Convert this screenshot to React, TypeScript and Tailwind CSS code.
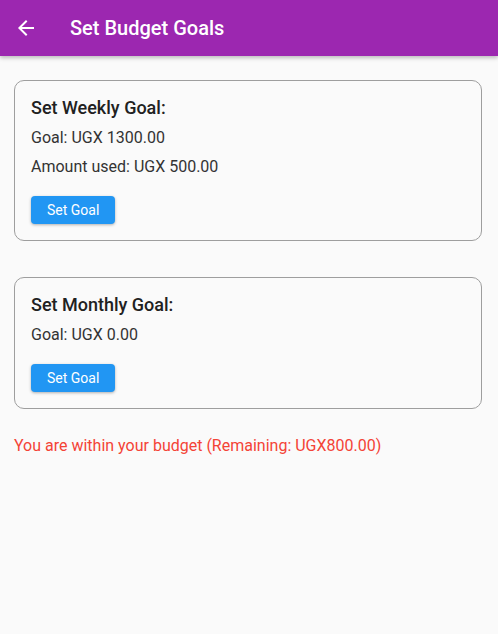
export default function App() {
  const font = { fontFamily: "Roboto, 'Noto Sans', sans-serif" }
  return (
    <div className="min-h-[634px] bg-[#fafafa]" style={font}>
      {/* App bar */}
      <div className="h-14 bg-[#9c27b0] flex items-center shadow-[0_2px_4px_rgba(0,0,0,0.25)] relative z-10">
        <div className="w-[56px] pl-[14px] flex items-center">
          <svg width="24" height="24" viewBox="0 0 24 24" fill="white">
            <path d="M20 11H7.83l5.59-5.59L12 4l-8 8 8 8 1.41-1.41L7.83 13H20v-2z" />
          </svg>
        </div>
        <h1 className="ml-[14px] text-white text-[20px] font-medium leading-none">Set Budget Goals</h1>
      </div>

      {/* Content */}
      <div className="pl-[14px] pr-4 pt-6">
        <div className="border border-[#9e9e9e] rounded-[10px] px-4 pt-[16px] pb-4">
          <h2 className="text-[18px] font-medium text-[#212121] leading-[21px]">Set Weekly Goal:</h2>
          <p className="mt-[10px] text-[16px] text-[#333333] leading-[19px]">Goal: UGX 1300.00</p>
          <p className="mt-[10px] text-[16px] text-[#333333] leading-[19px]">Amount used: UGX 500.00</p>
          <button className="mt-[20px] h-7 px-4 bg-[#2196f3] text-white text-[14px] rounded-[4px] shadow-[0_1px_3px_rgba(0,0,0,0.3)]">
            Set Goal
          </button>
        </div>

        <div className="mt-9 border border-[#9e9e9e] rounded-[10px] px-4 pt-[16px] pb-4">
          <h2 className="text-[18px] font-medium text-[#212121] leading-[21px]">Set Monthly Goal:</h2>
          <p className="mt-[10px] text-[16px] text-[#333333] leading-[19px]">Goal: UGX 0.00</p>
          <button className="mt-[20px] h-7 px-4 bg-[#2196f3] text-white text-[14px] rounded-[4px] shadow-[0_1px_3px_rgba(0,0,0,0.3)]">
            Set Goal
          </button>
        </div>

        <p className="mt-[27px] text-[16px] text-[#f44336] leading-[19px]">
          You are within your budget (Remaining: UGX800.00)
        </p>
      </div>
    </div>
  )
}
